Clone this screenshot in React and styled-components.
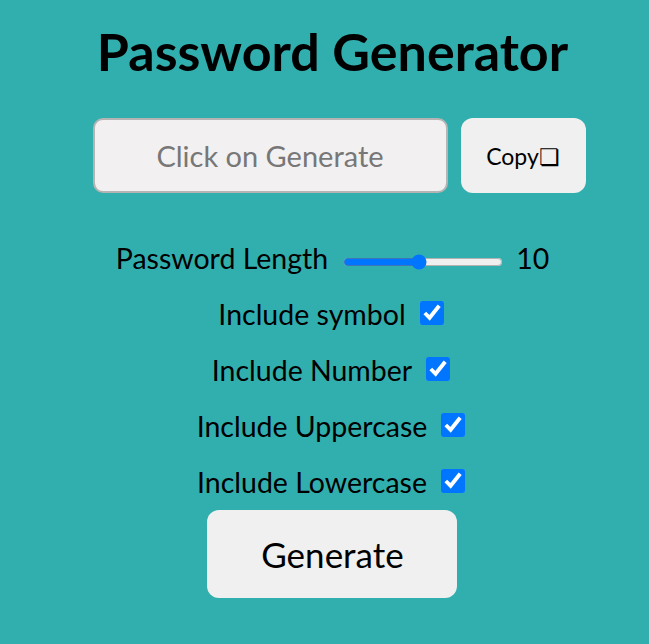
import React, { useState } from 'react';
import styled, { createGlobalStyle } from 'styled-components';

//STYLE
const GlobalStyle = createGlobalStyle`
    html, body{
        margin: 0;
        padding: 0;
        background: #31afaf;
        font-family: "Lato", "Open Sans", sans-serif;
    }
`;

const Page = styled.div`
    min-height: 644px;
    padding: 0 0 0 16px;
    background: #31afaf;
    display: flex;
    flex-direction: column;
    align-items: center;
    color: #000;
`;

const Title = styled.h1`
    margin: 19px 0 0 0;
    font-size: 52px;
    font-weight: 700;
    line-height: 64px;
`;

const DisplayRow = styled.div`
    display: flex;
    gap: 13px;
    margin-top: 35px;
    margin-left: 13px;
`;

const PasswordBox = styled.input`
    box-sizing: border-box;
    width: 355px;
    height: 75px;
    border: 2px solid #b4b4b4;
    border-radius: 10px;
    background: #f2f0f1;
    text-align: center;
    font-family: inherit;
    font-size: 29px;
    color: #777;
    outline: none;

    &::placeholder{
        color: #777;
    }
`;

const CopyButton = styled.button`
    width: 125px;
    height: 75px;
    border: none;
    border-radius: 12px;
    background: #f0f0f0;
    font-family: inherit;
    font-size: 23px;
    color: #000;
    cursor: pointer;
`;

const Options = styled.div`
    display: flex;
    flex-direction: column;
    align-items: center;
    margin-top: 37px;
`;

const Row = styled.div`
    height: 56px;
    line-height: 56px;
    text-align: center;
    font-size: 28.5px;
    white-space: nowrap;

    label{
        margin-right: 10px;
    }

    input[type='checkbox']{
        width: 24px;
        height: 24px;
        margin: 3px 3px 3px 4px;
    }
`;

const Slider = styled.input`
    width: 160px;
    margin: 0 13px 0 5px;
    vertical-align: middle;
`;

const GenerateButton = styled.button`
    margin-top: 0;
    width: 250px;
    height: 88px;
    border: none;
    border-radius: 12px;
    background: #f0f0f0;
    font-family: inherit;
    font-size: 35px;
    color: #000;
    cursor: pointer;
`;

const options = [
    { id: 'symbol', label: 'Include symbol' },
    { id: 'number', label: 'Include Number' },
    { id: 'upper', label: 'Include Uppercase' },
    { id: 'lower', label: 'Include Lowercase' },
];

const App = () => {
    const [length, setLength] = useState(10);
    const [checked, setChecked] = useState({ symbol: true, number: true, upper: true, lower: true });

    return (
        <>
            <GlobalStyle />
            <Page>
                <Title>Password Generator</Title>

                <DisplayRow>
                    <PasswordBox readOnly placeholder='Click on Generate' />
                    <CopyButton>Copy&#x274F;</CopyButton>
                </DisplayRow>

                <Options>
                    <Row>
                        <label htmlFor='length'>Password Length</label>
                        <Slider
                            id='length'
                            type='range'
                            min='1'
                            max='20'
                            value={length}
                            onChange={(e) => setLength(e.target.value)} />
                        <span>{length}</span>
                    </Row>

                    {options.map((opt) => (
                        <Row key={opt.id}>
                            <label htmlFor={opt.id}>{opt.label}</label>
                            <input
                                id={opt.id}
                                type='checkbox'
                                checked={checked[opt.id]}
                                onChange={() => setChecked({ ...checked, [opt.id]: !checked[opt.id] })} />
                        </Row>
                    ))}

                    <GenerateButton>Generate</GenerateButton>
                </Options>
            </Page>
        </>
    );
};

export default App;
